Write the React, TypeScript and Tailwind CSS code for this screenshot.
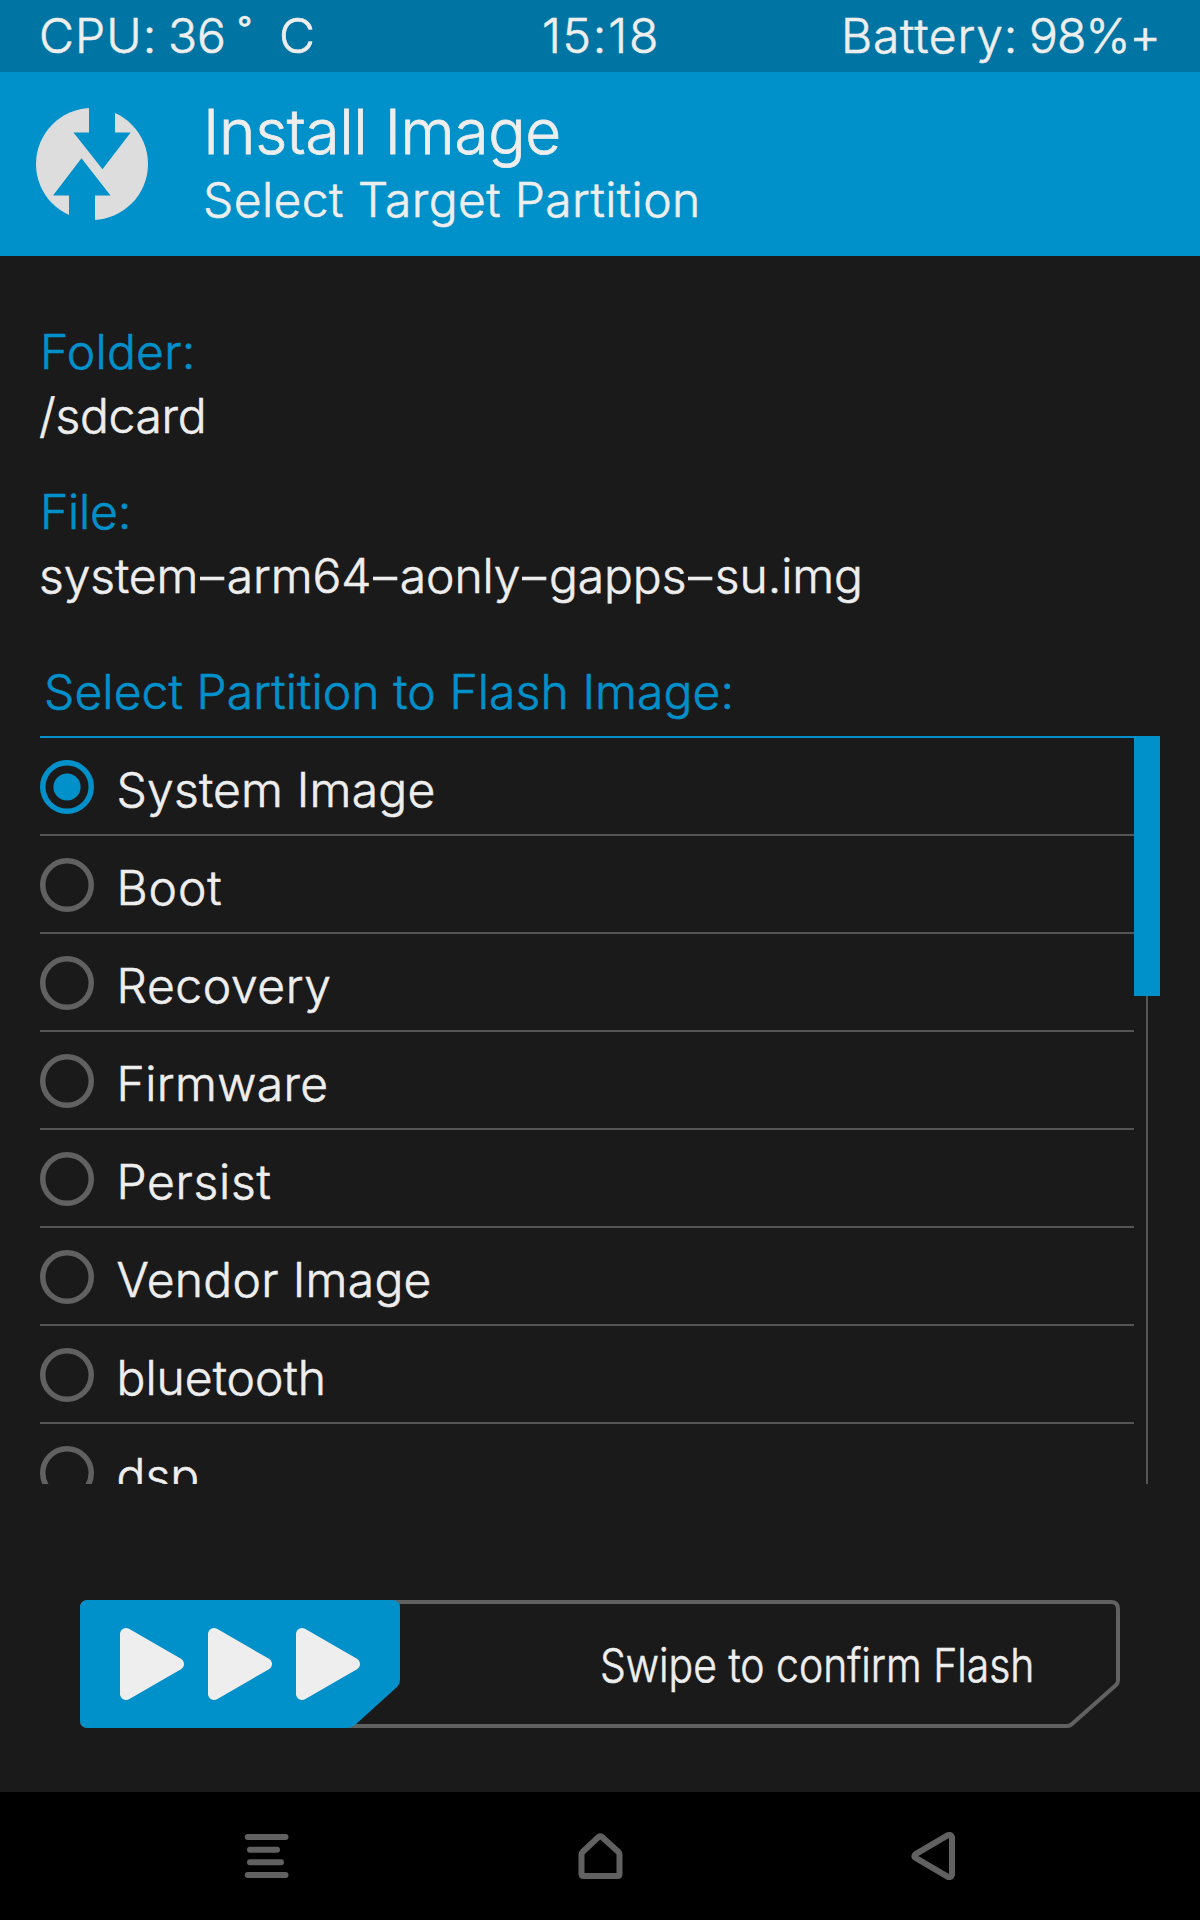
import { useState } from "react";

const partitions = [
  { name: "System Image", tracking: "tracking-[0.2px]" },
  { name: "Boot", tracking: "tracking-[0.9px]" },
  { name: "Recovery", tracking: "tracking-[0.6px]" },
  { name: "Firmware", tracking: "tracking-[0.4px]" },
  { name: "Persist", tracking: "tracking-[0.7px]" },
  { name: "Vendor Image", tracking: "tracking-[0.3px]" },
  { name: "bluetooth", tracking: "tracking-normal" },
  { name: "dsp", tracking: "tracking-normal" },
];

function Logo() {
  return (
    <svg width="112" height="112" viewBox="0 0 112 112" className="shrink-0">
      <circle cx="56" cy="56" r="56" fill="#dddddd" />
      <path d="M53 -2H79V24.5H94.7L66.5 61.3L37.5 24.5H53Z" fill="#0090ca" />
      <path d="M33 114H59V87.5H74.5L45.5 50.3L17 87.5H33Z" fill="#0090ca" />
    </svg>
  );
}

function Radio({ checked }: { checked: boolean }) {
  return (
    <svg width="54" height="54" viewBox="0 0 54 54" className="mt-[22px] shrink-0">
      <circle cx="27" cy="27" r="24.25" fill="none" strokeWidth="5.5" stroke={checked ? "#0090ca" : "#616161"} />
      {checked && <circle cx="27" cy="27" r="13.6" fill="#0090ca" />}
    </svg>
  );
}

function FileName({ name }: { name: string }) {
  return (
    <>
      {name.split(/(-)/).map((part, i) =>
        part === "-" ? (
          <span key={i} className="inline-block w-[28.5px] scale-x-160 text-center tracking-normal">
            -
          </span>
        ) : (
          <span key={i}>{part}</span>
        ),
      )}
    </>
  );
}

function StatusBar() {
  return (
    <div className="grid h-[72px] grid-cols-3 bg-[#0075a4] pr-[40px] pl-[39px] leading-[72px] whitespace-pre">
      <div className="flex">
        <span className="w-[129px] tracking-[1.1px]">CPU:</span>
        <span className="w-[70px]">36</span>
        <span className="w-[41px] pt-[2px]">˚</span>
        <span className="origin-left scale-x-[1.03]">C</span>
      </div>
      <div className="pl-[3px] text-center tracking-[1.8px]">15:18</div>
      <div className="flex justify-end">
        <span className="w-[188px] tracking-[0.8px]">Battery:</span>
        <span className="w-[131px] tracking-[-0.9px]">98%+</span>
      </div>
    </div>
  );
}

function Header() {
  return (
    <header className="flex h-[184px] items-start bg-[#0090ca] pl-[36px]">
      <div className="pt-[36px]">
        <Logo />
      </div>
      <div className="ml-[55px] pt-[28px]">
        <h1 className="text-[62px] leading-[64px] tracking-[-0.3px] [-webkit-text-stroke:0.8px_#eeeeee]">Install Image</h1>
        <p className="mt-[4px] leading-[64px] tracking-[0.4px]">Select Target Partition</p>
      </div>
    </header>
  );
}

function SwipeSlider() {
  return (
    <div className="relative mx-[80px] mt-[116px] flex h-[128px] items-center justify-end pr-[86px]">
      <svg width="1040" height="128" viewBox="0 0 1040 128" className="absolute inset-0">
        <path
          d="M8 2H1031Q1038 2 1038 9V80Q1038 83 1036 85L992 124Q990 126 987 126H8Q2 126 2 120V8Q2 2 8 2Z"
          fill="none"
          stroke="#616161"
          strokeWidth="4"
        />
        <path
          d="M8 0H312Q320 0 320 8V80Q320 84 317 87L275 125Q271.500 128 267 128H8Q0 128 0 120V8Q0 0 8 0Z"
          fill="#0090ca"
        />
        {[40, 128, 216].map((x) => (
          <path
            key={x}
            transform={"translate(" + x + " 28)"}
            d="M6 6L58 36L6 66Z"
            fill="#eeeeee"
            stroke="#eeeeee"
            strokeWidth="12"
            strokeLinejoin="round"
          />
        ))}
      </svg>
      <span className="relative top-[1px] origin-right scale-x-[0.87] text-[47px] leading-[64px] whitespace-nowrap">
        Swipe to confirm Flash
      </span>
    </div>
  );
}

function NavBar() {
  return (
    <nav className="flex h-[128px] items-center justify-center gap-[286px] bg-black">
      <button aria-label="Menu">
        <svg width="48" height="48" viewBox="0 0 48 48" fill="none" stroke="#616161" strokeWidth="6" strokeLinecap="round">
          <path d="M5.700 5H43.500M8 17.700H35M8 30.300H39M5.700 43H43.500" />
        </svg>
      </button>
      <button aria-label="Home">
        <svg width="48" height="48" viewBox="0 0 48 48" fill="none" stroke="#616161" strokeWidth="6" strokeLinejoin="round">
          <path d="M5.500 22.500Q5.500 21 6.500 20L22.500 5Q24.300 3.800 26 5L42.500 20Q43.500 21 43.500 22.500V42Q43.500 44 41.500 44H7.500Q5.500 44 5.500 42Z" />
        </svg>
      </button>
      <button aria-label="Back">
        <svg width="48" height="48" viewBox="0 0 48 48" fill="none" stroke="#616161" strokeWidth="6" strokeLinejoin="round">
          <path d="M37.500 3.400Q41.500 1.800 42 5.500V42.500Q41.500 46.200 37.500 44.600L6 26.200Q2.500 24 6 21.800Z" />
        </svg>
      </button>
    </nav>
  );
}

export default function App() {
  const [selected, setSelected] = useState(0);
  return (
    <div className="flex h-[1920px] w-[1200px] flex-col overflow-hidden bg-[#1a1a1a] font-['Inter',sans-serif] text-[48px] font-light text-[#eeeeee] [-webkit-text-stroke:0.6px_currentColor]">
      <StatusBar />
      <Header />
      <main className="flex-1">
        <section className="px-[40px] pt-[64px] leading-[64px]">
          <div className="tracking-[0.3px] text-[#0090ca] [-webkit-text-stroke:0.6px_#0090ca]">Folder:</div>
          <div className="-ml-px tracking-[-0.3px]">/sdcard</div>
          <div className="mt-[32px] tracking-[-0.2px] text-[#0090ca] [-webkit-text-stroke:0.6px_#0090ca]">File:</div>
          <div className="-ml-px tracking-[-0.1px]">
            <FileName name="system-arm64-aonly-gapps-su.img" />
          </div>
        </section>
        <section className="mx-[40px] mt-[52px]">
          <h2 className="h-[76px] pl-[4px] leading-[64px] tracking-[0.1px] text-[#0090ca] [-webkit-text-stroke:0.6px_#0090ca]">
            Select Partition to Flash Image:
          </h2>
          <div className="flex h-[748px] overflow-hidden">
            <div className="w-[1094px]">
              {partitions.map((p, i) => (
                <div
                  key={p.name}
                  onClick={() => setSelected(i)}
                  className={
                    i === 0
                      ? "flex h-[98px] items-start border-t-2 border-[#0090ca]"
                      : "flex h-[98px] items-start border-t-2 border-[#555555]"
                  }
                >
                  <Radio checked={i === selected} />
                  <span className={"mt-[20px] ml-[22.5px] leading-[64px] " + p.tracking}>{p.name}</span>
                </div>
              ))}
            </div>
            <div className="flex w-[26px] flex-col items-center">
              <div className="h-[260px] w-full bg-[#0090ca]" />
              <div className="w-[2px] flex-1 bg-[#555555]" />
            </div>
          </div>
        </section>
        <SwipeSlider />
      </main>
      <NavBar />
    </div>
  );
}
